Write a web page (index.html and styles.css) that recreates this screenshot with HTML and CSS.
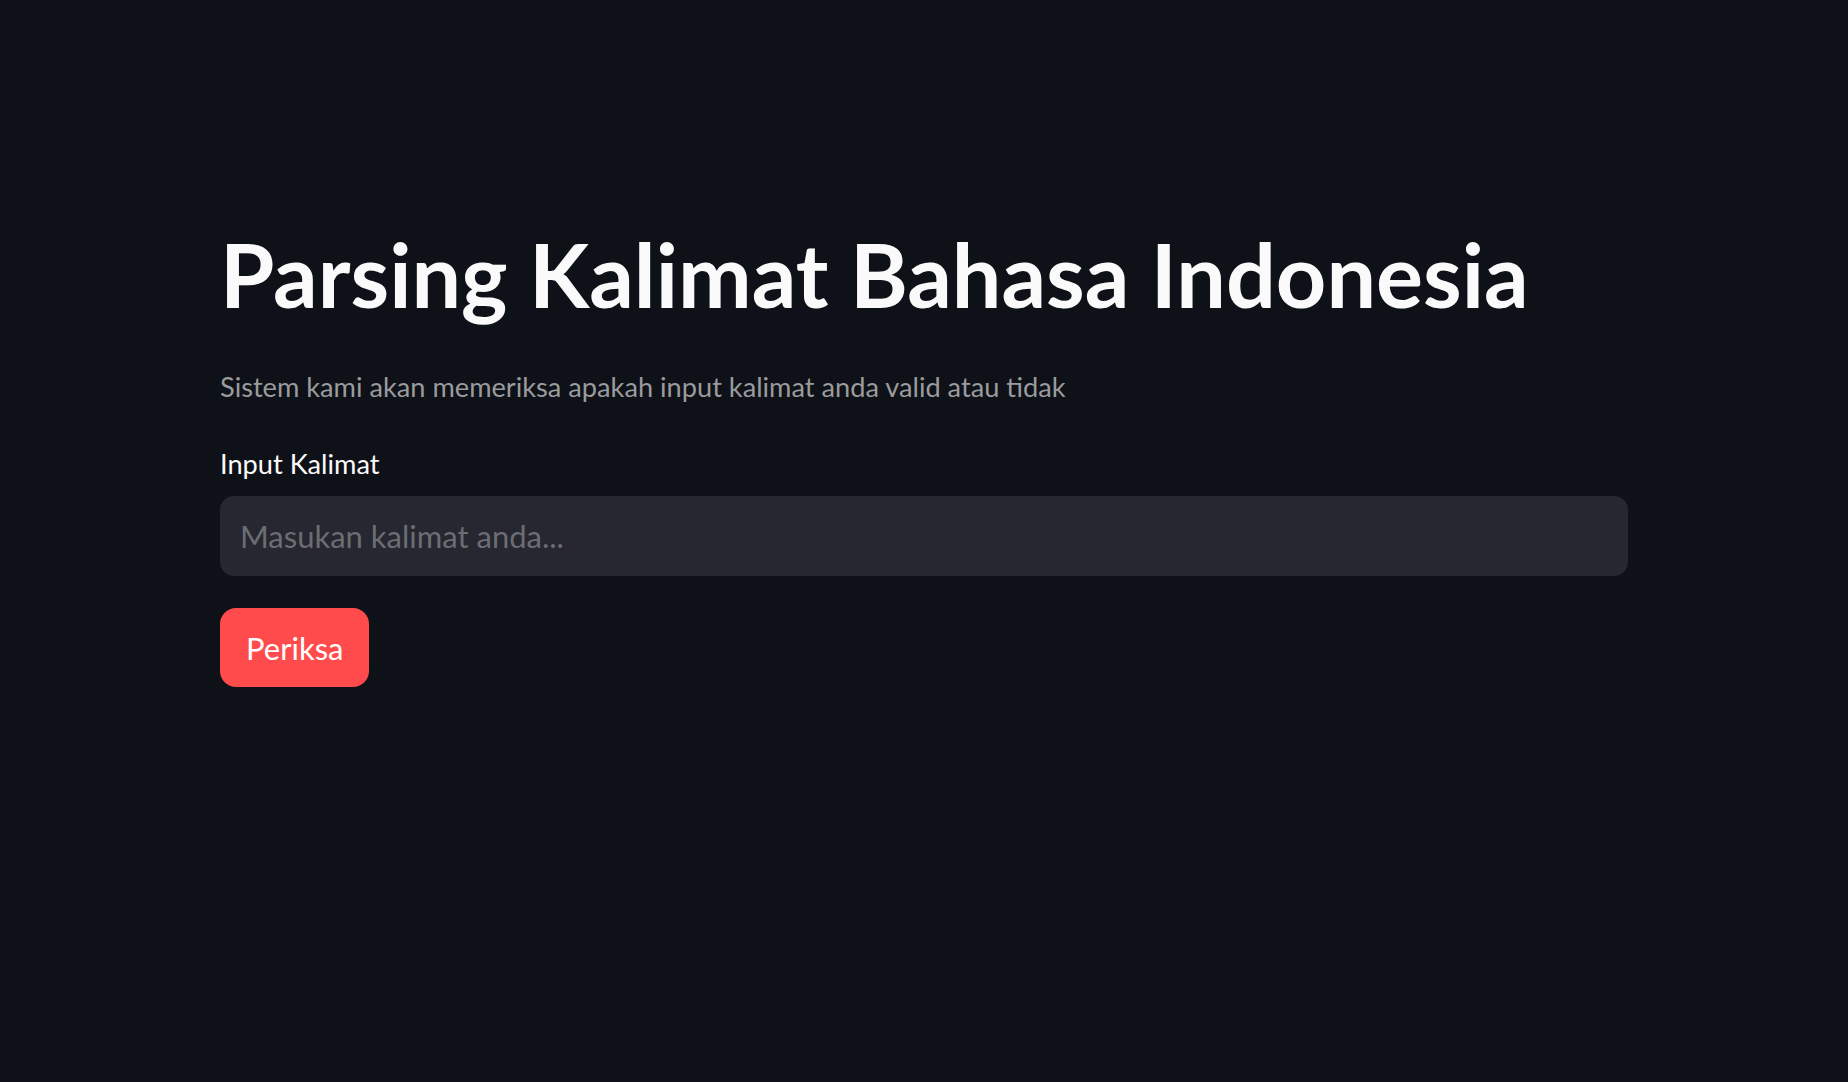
FILE: index.html
```html
<!DOCTYPE html>
<html lang="id">
<head>
<meta charset="utf-8">
<title>Parsing Kalimat Bahasa Indonesia</title>
<link rel="stylesheet" href="styles.css">
</head>
<body>
<main class="container">
  <h1 class="title">Parsing Kalimat Bahasa Indonesia</h1>
  <p class="caption">Sistem kami akan memeriksa apakah input kalimat anda valid atau tidak</p>
  <label class="label" for="kalimat">Input Kalimat</label>
  <input class="text-input" id="kalimat" type="text" placeholder="Masukan kalimat anda...">
  <button class="btn" type="button">Periksa</button>
</main>
</body>
</html>
```

FILE: styles.css
```css
html, body {
  margin: 0;
  padding: 0;
  background: #0e1117;
  height: 100%;
}

body {
  font-family: "Source Sans Pro", Lato, "Noto Sans", sans-serif;
  color: #fafafa;
}

.container {
  width: 1408px;
  margin: 0 auto;
  padding-top: 221px;
  display: flex;
  flex-direction: column;
  align-items: flex-start;
}

.title {
  margin: 0;
  font-size: 88px;
  font-weight: 700;
  line-height: 106px;
  color: #fafafa;
  letter-spacing: 0;
}

.caption {
  margin: 43px 0 0;
  font-size: 27.2px;
  line-height: 34px;
  color: #9a9b9e;
}

.label {
  margin-top: 43px;
  font-size: 27.2px;
  line-height: 34px;
  color: #fafafa;
}

.text-input {
  margin-top: 15px;
  box-sizing: border-box;
  width: 100%;
  height: 80px;
  border: none;
  outline: none;
  border-radius: 14px;
  background: #262730;
  padding: 0 20px;
  font-family: inherit;
  font-size: 31px;
  color: #fafafa;
}

.text-input::placeholder {
  color: #6c6d72;
}

.btn {
  margin-top: 32px;
  height: 79px;
  padding: 0 26px;
  border: none;
  border-radius: 16px;
  background: #ff4b4b;
  color: #ffffff;
  font-family: inherit;
  font-size: 31px;
  cursor: pointer;
}
```
